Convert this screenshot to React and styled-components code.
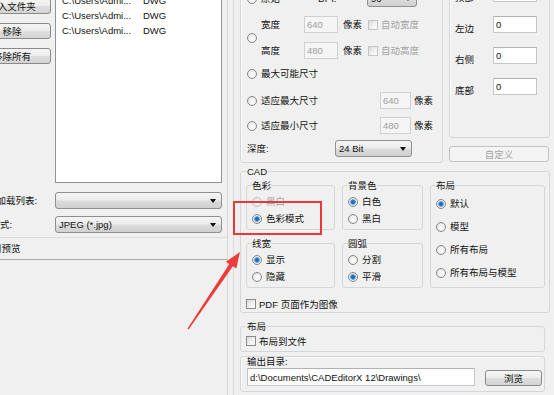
import React from "react";
import styled, { createGlobalStyle } from "styled-components";

const Global = createGlobalStyle`
  html, body { margin: 0; padding: 0; background: #f0f0f0; overflow: hidden; }
  body {
    font-family: "Liberation Sans", "Noto Sans CJK SC", sans-serif;
    font-size: 9.5px;
    line-height: 11px;
    color: #111;
  }
  * { box-sizing: border-box; }
`;

const Stage = styled.div`
  position: relative;
  width: 554px;
  height: 395px;
  overflow: hidden;
`;

const Window = styled.div`
  display: flex;
  align-items: stretch;
  margin: -24px 0 0 -30px;
  height: 430px;
  width: 620px;
`;

/* ---------- left panel ---------- */
const LeftPanel = styled.div`
  flex: none;
  width: 258px;
  padding: 14px 5px 0 3px;
  border-right: 1px solid #d6d6d6;
  display: flex;
  flex-direction: column;
`;

const TopSection = styled.div`
  display: flex;
  gap: 4px;
  height: 193px;
`;

const ButtonCol = styled.div`
  width: 78px;
  flex: none;
  display: flex;
  flex-direction: column;
  gap: 9px;
  padding-top: 8px;
`;

const PushButton = styled.div`
  height: ${(p) => p.$h || 16}px;
  width: ${(p) => (p.$w ? `${p.$w}px` : "auto")};
  margin-top: ${(p) => p.$mt || 0}px;
  border: 1px solid ${(p) => (p.$disabled ? "#c2c2c2" : "#8a8a8a")};
  border-radius: 3px;
  background: ${(p) =>
    p.$disabled
      ? "#f4f4f4"
      : "linear-gradient(#f6f6f6, #ececec 48%, #dedede 52%, #d4d4d4)"};
  color: ${(p) => (p.$disabled ? "#a3a3a3" : "#111")};
  display: flex;
  align-items: center;
  justify-content: center;
  white-space: nowrap;
  flex: none;
`;

const FileList = styled.div`
  width: 167px;
  flex: none;
  background: #fff;
  border: 1px solid #8f949b;
  padding-top: 2px;
`;

const FileRow = styled.div`
  display: flex;
  align-items: center;
  height: 15px;
  padding-left: 6px;
  white-space: nowrap;
`;

const FilePath = styled.span`
  width: 81px;
  flex: none;
`;

const FormGrid = styled.div`
  display: grid;
  grid-template-columns: 78px 167px;
  column-gap: 4px;
  row-gap: 7px;
  margin-top: 9px;
`;

const FieldLabel = styled.div`
  display: flex;
  align-items: center;
  padding-left: ${(p) => p.$pad}px;
  white-space: nowrap;
`;

const Combo = styled.div`
  height: 17px;
  width: ${(p) => (p.$w ? `${p.$w}px` : "auto")};
  flex: none;
  border: 1px solid #8e8f8f;
  border-radius: 3px;
  background: linear-gradient(#f5f5f5, #ebebeb 48%, #dcdcdc 52%, #d0d0d0);
  display: flex;
  align-items: center;
  justify-content: space-between;
  padding: 0 5px 0 3px;
  white-space: nowrap;
`;

const ComboArrow = styled.span`
  width: 0;
  height: 0;
  border-left: 3.5px solid transparent;
  border-right: 3.5px solid transparent;
  border-top: 4px solid #111;
`;

const PreviewBar = styled.div`
  margin: 4px -5px 0 0;
  height: 23px;
  border-top: 1px solid #dcdcdc;
  border-bottom: 1px solid #a9a9a9;
  display: flex;
  align-items: center;
  padding-left: 9.5px;
`;

/* ---------- right area ---------- */
const RightArea = styled.div`
  flex: none;
  width: 330px;
  margin-left: 5px;
  padding: 4px 0 0 6px;
  border-left: 1px solid #dcdcdc;
  display: flex;
  flex-direction: column;
`;

const TopRow = styled.div`
  display: flex;
  gap: 6px;
  align-items: flex-start;
`;

const Box = styled.div`
  border: 1px solid #d3d7da;
  border-radius: 3px;
  box-shadow: inset 1px 1px 0 #fafafa;
`;

const SizeGroup = styled(Box)`
  width: 203px;
  padding: 9px 5px 5px 6px;
  display: flex;
  flex-direction: column;
`;

const Row = styled.div`
  display: flex;
  align-items: center;
  height: ${(p) => (p.$h ? `${p.$h}px` : "auto")};
  margin-top: ${(p) => p.$mt || 0}px;
  white-space: nowrap;
`;

const SizeStack = styled.div`
  display: flex;
  flex-direction: column;
  gap: 9px;
`;

const RadioDot = styled.span`
  flex: none;
  width: 10px;
  height: 10px;
  border-radius: 50%;
  margin-right: 4px;
  border: 1px solid ${(p) => (p.$disabled ? "#bdbdbd" : "#868686")};
  background: ${(p) =>
    p.$checked
      ? "radial-gradient(circle at 50% 50%, #1f5fae 0, #2a77c8 1.6px, #74aee2 2.6px, #eaeaea 3.2px, #f7f7f7 100%)"
      : "radial-gradient(circle at 60% 60%, #fefefe 0, #f2f2f2 45%, #d9d9d9 100%)"};
`;

const Check = styled.span`
  flex: none;
  width: 10px;
  height: 10px;
  margin-left: ${(p) => p.$ml || 0}px;
  margin-right: 3px;
  border: 1px solid ${(p) => (p.$disabled ? "#c4c4c4" : "#8a8a8a")};
  background: linear-gradient(135deg, #dadada, #f6f6f6 70%, #ffffff);
`;

const Text = styled.span`
  display: inline-block;
  width: ${(p) => (p.$w ? `${p.$w}px` : "auto")};
  margin-left: ${(p) => p.$ml || 0}px;
  color: ${(p) => (p.$disabled ? "#a3a3a3" : "inherit")};
  flex: none;
`;

const Edit = styled.input`
  flex: none;
  width: ${(p) => p.$w}px;
  height: ${(p) => p.$h || 17}px;
  margin: 0;
  padding: 0 2px;
  font: inherit;
  color: #111;
  background: #fff;
  border: 1px solid #c3c6cb;
  border-top-color: #aeb1b6;
  outline: none;
  &:disabled {
    color: #a0a0a0;
    background: #f5f5f5;
    border-color: #cfd1d4;
  }
`;

const SideCol = styled.div`
  width: 101px;
  flex: none;
  display: flex;
  flex-direction: column;
`;

const MarginGroup = styled(Box)`
  height: 158px;
  padding: 4px 0 0 5px;
  display: flex;
  flex-direction: column;
  gap: 14px;
`;

const MarginRow = styled.div`
  display: flex;
  align-items: flex-start;
  height: 17px;
`;

const MarginLabel = styled.span`
  width: 38px;
  flex: none;
  margin-top: 7px;
`;

const Group = styled.fieldset`
  margin: ${(p) => p.$mt || 0}px 0 0;
  padding: ${(p) => p.$pad};
  width: ${(p) => (p.$w ? `${p.$w}px` : "auto")};
  min-width: 0;
  border: 1px solid #d3d7da;
  border-radius: 3px;
`;

const Legend = styled.legend`
  padding: 0 ${(p) => p.$px ?? 1}px;
  margin: 0;
  line-height: 11px;
  white-space: nowrap;
`;

const SubGrid = styled.div`
  display: grid;
  grid-template-columns: 89px 81px 115px;
  grid-template-rows: auto auto;
  column-gap: 7px;
  row-gap: 8px;
`;

const SubGroup = styled.fieldset`
  margin: 0;
  min-width: 0;
  padding: ${(p) => p.$pt || 3}px 2px 3px 5px;
  border: 1px solid #d3d7da;
  border-radius: 3px;
  grid-column: ${(p) => p.$col};
  grid-row: ${(p) => p.$row};
`;

const Options = styled.div`
  display: flex;
  flex-direction: column;
  gap: ${(p) => p.$gap || 2}px;
`;

const OutputBox = styled(Box)`
  margin-top: 4px;
  width: 305px;
  padding: 0 3px 5px 6px;
`;

const OutputLabel = styled.div`
  line-height: 10px;
  height: 10px;
`;

const OutputRow = styled.div`
  display: flex;
  align-items: flex-end;
  gap: 10px;
  margin-top: 1px;
`;

/* ---------- annotations ---------- */
const Highlight = styled.div`
  position: absolute;
  left: 233px;
  top: 201px;
  width: 89px;
  height: 34px;
  border: 2px solid #e8383a;
  pointer-events: none;
`;

const ArrowLayer = styled.svg`
  position: absolute;
  left: 0;
  top: 0;
  pointer-events: none;
`;

const RadioOption = ({ checked, disabled, w, children, h = 15 }) => (
  <Row $h={h}>
    <RadioDot $checked={checked} $disabled={disabled} />
    <Text $w={w} $disabled={disabled}>
      {children}
    </Text>
  </Row>
);

const files = ["C:\\Users\\Admi...", "C:\\Users\\Admi...", "C:\\Users\\Admi..."];

export default function App() {
  return (
    <>
      <Global />
      <Stage>
        <Window>
          <LeftPanel>
            <TopSection>
              <ButtonCol>
                <PushButton>加入文件夹</PushButton>
                <PushButton>移除</PushButton>
                <PushButton>移除所有</PushButton>
              </ButtonCol>
              <FileList>
                {files.map((f, i) => (
                  <FileRow key={i}>
                    <FilePath>{f}</FilePath>
                    <span>DWG</span>
                  </FileRow>
                ))}
              </FileList>
            </TopSection>
            <FormGrid>
              <FieldLabel $pad={23.5}>加载列表:</FieldLabel>
              <Combo>
                <span />
                <ComboArrow />
              </Combo>
              <FieldLabel $pad={17.5}>格式:</FieldLabel>
              <Combo>
                <span>JPEG (*.jpg)</span>
                <ComboArrow />
              </Combo>
            </FormGrid>
            <PreviewBar>启用预览</PreviewBar>
          </LeftPanel>

          <RightArea>
            <TopRow>
              <SizeGroup>
                <Row $h={17}>
                  <RadioDot />
                  <Text $w={57}>原始</Text>
                  <Text $w={49}>DPI:</Text>
                  <Combo $w={50}>
                    <span>96</span>
                    <ComboArrow />
                  </Combo>
                </Row>
                <Row $mt={9}>
                  <RadioDot />
                  <SizeStack>
                    <Row $h={17}>
                      <Text $w={43}>宽度</Text>
                      <Edit $w={34} value="640" disabled readOnly />
                      <Text $ml={5} $w={19}>像素</Text>
                      <Check $ml={6} $disabled />
                      <Text $disabled>自动宽度</Text>
                    </Row>
                    <Row $h={17}>
                      <Text $w={43}>高度</Text>
                      <Edit $w={34} value="480" disabled readOnly />
                      <Text $ml={5} $w={19}>像素</Text>
                      <Check $ml={6} $disabled />
                      <Text $disabled>自动高度</Text>
                    </Row>
                  </SizeStack>
                </Row>
                <Row $h={17} $mt={6}>
                  <RadioDot />
                  <Text>最大可能尺寸</Text>
                </Row>
                <Row $h={17} $mt={10}>
                  <RadioDot />
                  <Text $w={119}>适应最大尺寸</Text>
                  <Edit $w={31} value="640" disabled readOnly />
                  <Text $ml={3}>像素</Text>
                </Row>
                <Row $h={17} $mt={8}>
                  <RadioDot />
                  <Text $w={119}>适应最小尺寸</Text>
                  <Edit $w={31} value="480" disabled readOnly />
                  <Text $ml={3}>像素</Text>
                </Row>
                <Row $h={17} $mt={6}>
                  <Text $w={88}>深度:</Text>
                  <Combo $w={77}>
                    <span>24 Bit</span>
                    <ComboArrow />
                  </Combo>
                </Row>
              </SizeGroup>

              <SideCol>
                <MarginGroup>
                  {["顶部", "左边", "右侧", "底部"].map((l) => (
                    <MarginRow key={l}>
                      <MarginLabel>{l}</MarginLabel>
                      <Edit $w={44} value="0" readOnly />
                    </MarginRow>
                  ))}
                </MarginGroup>
                <PushButton $disabled $w={100} $mt={8}>
                  自定义
                </PushButton>
              </SideCol>
            </TopRow>

            <Group $mt={3} $w={310} $pad="3px 4px 2px 5px">
              <Legend>CAD</Legend>
              <SubGrid>
                <SubGroup $col="1" $row="1">
                  <Legend $px={0}>色彩</Legend>
                  <Options>
                    <RadioOption disabled>黑白</RadioOption>
                    <RadioOption checked>色彩模式</RadioOption>
                  </Options>
                </SubGroup>
                <SubGroup $col="2" $row="1">
                  <Legend $px={0}>背景色</Legend>
                  <Options>
                    <RadioOption checked>白色</RadioOption>
                    <RadioOption>黑白</RadioOption>
                  </Options>
                </SubGroup>
                <SubGroup $col="3" $row="1 / span 2" $pt={5}>
                  <Legend $px={0}>布局</Legend>
                  <Options $gap={8}>
                    <RadioOption checked>默认</RadioOption>
                    <RadioOption>模型</RadioOption>
                    <RadioOption>所有布局</RadioOption>
                    <RadioOption>所有布局与模型</RadioOption>
                  </Options>
                </SubGroup>
                <SubGroup $col="1" $row="2">
                  <Legend $px={0}>线宽</Legend>
                  <Options>
                    <RadioOption checked>显示</RadioOption>
                    <RadioOption>隐藏</RadioOption>
                  </Options>
                </SubGroup>
                <SubGroup $col="2" $row="2">
                  <Legend $px={0}>圆弧</Legend>
                  <Options>
                    <RadioOption>分割</RadioOption>
                    <RadioOption checked>平滑</RadioOption>
                  </Options>
                </SubGroup>
              </SubGrid>
              <Row $h={12} $mt={10}>
                <Check />
                <Text>PDF 页面作为图像</Text>
              </Row>
            </Group>

            <Group $mt={8} $w={305} $pad="3px 4px 4px 5px">
              <Legend>布局</Legend>
              <Row $h={12}>
                <Check />
                <Text>布局到文件</Text>
              </Row>
            </Group>

            <OutputBox>
              <OutputLabel>输出目录:</OutputLabel>
              <OutputRow>
                <Edit $w={228} $h={18} value={"d:\\Documents\\CADEditorX 12\\Drawings\\"} readOnly />
                <PushButton $w={57}>浏览</PushButton>
              </OutputRow>
            </OutputBox>
          </RightArea>
        </Window>

        <Highlight />
        <ArrowLayer width="554" height="395" viewBox="0 0 554 395">
          <polygon
            points="240,252 236.3,268.6 232.9,266.3 188.6,329.4 187.4,328.8 229.3,264.1 225.9,261.8"
            fill="#ee3b3b"
          />
        </ArrowLayer>
      </Stage>
    </>
  );
}
